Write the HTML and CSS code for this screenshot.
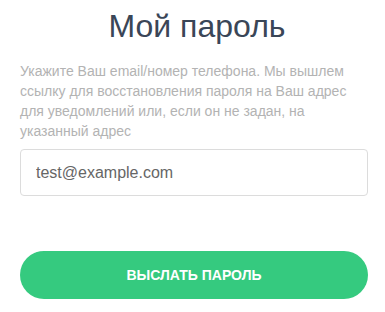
FILE: index.html
```html
<!DOCTYPE html>
<html lang="ru">
<head>
    <meta charset="UTF-8">
    <meta name="viewport" content="width=device-width, initial-scale=1.0">
    <title>Мой пароль</title>
    <link rel="stylesheet" href="styles.css">
</head>
<body>

    <div class="container">
        <h1>Мой пароль</h1>

        <p class="hint">Укажите Ваш email/номер телефона. Мы вышлем ссылку для восстановления пароля на Ваш адрес для уведомлений или, если он не задан, на указанный адрес</p>

        <input type="text" id="login" value="test@example.com">

        <button id="sendButton">Выслать пароль</button>
    </div>

</body>
</html>
```

FILE: styles.css
```css
body {
    font-family: "Liberation Sans", Arial, sans-serif;
    margin: 0;
    padding: 0;
    background-color: #FFFFFF;
}
.container {
    padding: 6px 17px 0 20px;
}
h1 {
    margin: 0;
    padding-left: 6px;
    font-size: 32px;
    line-height: 40px;
    font-weight: normal;
    text-align: center;
    color: #3a4657;
}
.hint {
    margin: 15px 0 8px;
    font-size: 14px;
    line-height: 20px;
    color: #b3b3b3;
}
input {
    display: block;
    box-sizing: border-box;
    width: 100%;
    height: 47px;
    padding: 0 15px;
    font-family: inherit;
    font-size: 16px;
    color: #666;
    border: 1px solid #dcdcdc;
    border-radius: 4px;
    outline: none;
}
button {
    display: block;
    width: 100%;
    height: 48px;
    margin-top: 55px;
    font-family: inherit;
    font-size: 14px;
    font-weight: bold;
    text-transform: uppercase;
    color: white;
    background: #35ca7f;
    border: none;
    border-radius: 24px;
    cursor: pointer;
}
```
